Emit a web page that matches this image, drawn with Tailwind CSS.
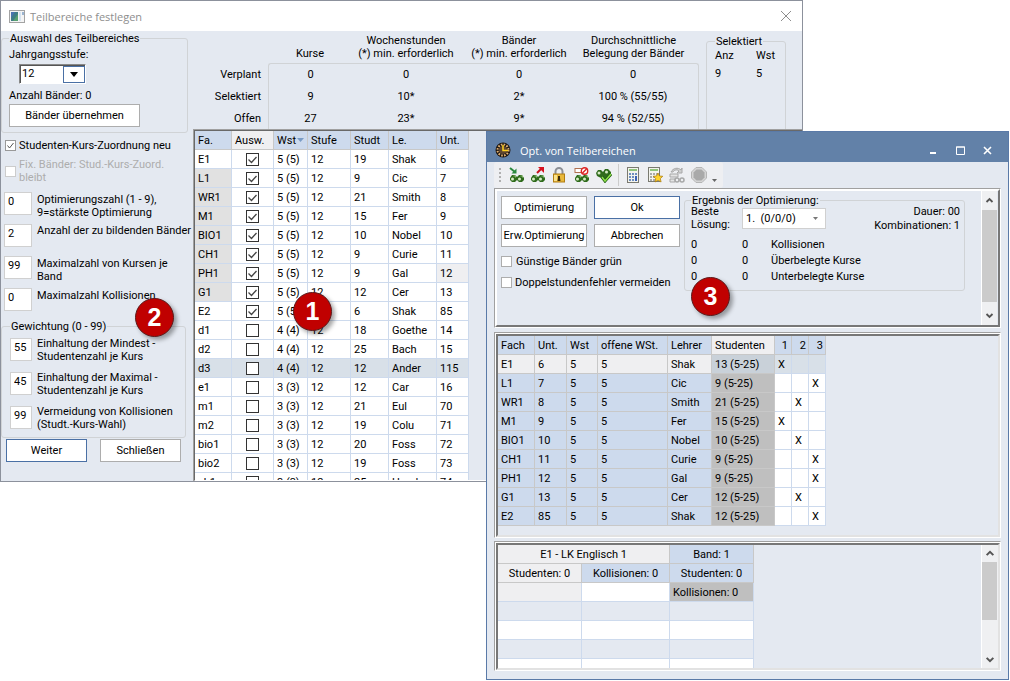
<!DOCTYPE html>
<html class="h-full bg-white" lang="de">
  <head>
    <meta charset="UTF-8" />
    <meta name="viewport" content="width=device-width, initial-scale=1.0" />
    <script src="https://cdn.jsdelivr.net/npm/@tailwindcss/browser@4"></script>
    <title>Teilbereiche festlegen</title>
  </head>
  <body
    class="relative h-full overflow-hidden font-[Roboto,'Liberation_Sans',sans-serif] text-[11px] leading-[13px] whitespace-nowrap text-black"
  >
    <!-- Window: Teilbereiche festlegen -->
    <main
      class="absolute top-0 right-[207px] bottom-[199px] left-0 flex flex-col border border-[#8c919c] bg-[#e4e9f1]"
    >
      <header class="flex h-[30px] shrink-0 items-center bg-white pr-2 pl-2">
        <svg class="h-4 w-4" viewBox="0 0 16 16">
          <rect x="0.5" y="2.5" width="15" height="12" fill="#f4f4f4" stroke="#a3a3a3" />
          <rect x="2" y="4" width="7" height="9" fill="#3f7d86" />
          <path d="M2 4h4l-4 6z" fill="#4a74b0" />
          <path d="M9 6v7H4z" fill="#58a070" />
          <rect x="10" y="4" width="2" height="9" fill="#d5e3f0" />
          <rect x="13" y="4" width="2" height="3" fill="#9ab4d0" />
        </svg>
        <h1 class="ml-[5px] flex-1 font-['Open_Sans',sans-serif] text-[11px] font-medium text-[#8e8e8e]">
          Teilbereiche festlegen
        </h1>
        <button class="flex h-5 w-4 items-center justify-center" aria-label="Schließen">
          <svg class="h-3 w-3" viewBox="0 0 12 12" fill="none" stroke="#8e8e8e">
            <path d="M1 1l10 10M11 1L1 11" />
          </svg>
        </button>
      </header>

      <div class="flex min-h-0 flex-1">
        <form class="w-[192px] shrink-0 pt-px">
          <fieldset class="w-[187px] rounded-[3px] border border-[#d0d3d6] px-[7px] pb-[5px]">
            <legend class="px-px">Auswahl des Teilbereiches</legend>
            <label for="stufe" class="mt-[3px] block">Jahrgangsstufe:</label>
            <div
              class="relative mt-[3px] ml-[10px] h-5 w-[67px] border border-t-[#888] border-r-white border-b-white border-l-[#888] bg-white"
            >
              <select
                id="stufe"
                class="block h-full w-full appearance-none border-t border-l border-[#555] pb-[3px] pl-px outline-none"
              >
                <option>12</option>
              </select>
              <span
                class="pointer-events-none absolute top-px right-0 bottom-0 flex w-[22px] items-center justify-center border border-[#4a70a5]"
              >
                <svg class="h-[5px] w-2" viewBox="0 0 8 5"><path d="M0 0h8L4 5z" /></svg>
              </span>
            </div>
            <p class="mt-[5px]">Anzahl Bänder: 0</p>
            <button type="button" class="mt-[2px] h-[23px] w-[131px] border border-[#adadad] bg-white">
              Bänder übernehmen
            </button>
          </fieldset>

          <label class="mt-[6px] flex items-center gap-[3px] pl-1">
            <span class="grid">
              <input
                type="checkbox"
                checked
                class="peer col-start-1 row-start-1 h-[11px] w-[11px] appearance-none border border-[#999] bg-white"
              />
              <svg
                class="col-start-1 row-start-1 hidden h-[11px] w-[11px] peer-checked:block"
                viewBox="0 0 11 11"
                fill="none"
                stroke="#555"
              >
                <path d="M2.500 5.500l2 2.500l4-5" />
              </svg>
            </span>
            Studenten-Kurs-Zuordnung neu
          </label>
          <label class="mt-[6px] flex items-center gap-[3px] pl-1 text-[#adadad]">
            <input
              type="checkbox"
              disabled
              class="h-[11px] w-[11px] shrink-0 appearance-none border border-[#ccc] bg-white"
            />
            <span>Fix. Bänder: Stud.-Kurs-Zuord.<br />bleibt</span>
          </label>

          <div class="mt-2 grid gap-[5px] pl-[3px]">
            <div class="flex h-[27px] items-start gap-[5px]">
              <input id="opt" value="0" class="h-[23px] w-7 border border-[#d0d0d0] bg-white px-[3px] pb-1 outline-none" />
              <label for="opt" class="pt-px">Optimierungszahl (1 - 9),<br />9=stärkste Optimierung</label>
            </div>
            <div class="flex h-[27px] items-start gap-[5px]">
              <input id="anz" value="2" class="h-[23px] w-7 border border-[#d0d0d0] bg-white px-[3px] pb-1 outline-none" />
              <label for="anz">Anzahl der zu bildenden Bänder</label>
            </div>
            <div class="flex h-[27px] items-start gap-[5px]">
              <input id="maxk" value="99" class="h-[23px] w-7 border border-[#d0d0d0] bg-white px-[3px] pb-1 outline-none" />
              <label for="maxk" class="pt-px">Maximalzahl von Kursen je<br />Band</label>
            </div>
            <div class="flex h-[27px] items-start gap-[5px]">
              <input id="koll" value="0" class="h-[23px] w-7 border border-[#d0d0d0] bg-white px-[3px] pb-1 outline-none" />
              <label for="koll" class="pt-px">Maximalzahl Kollisionen</label>
            </div>
          </div>

          <fieldset class="mt-[5px] w-[185px] rounded-[3px] border border-[#d0d3d6] px-2 pt-1 pb-[5px]">
            <legend class="px-px">Gewichtung (0 - 99)</legend>
            <div class="grid gap-[7px]">
              <div class="flex h-[27px] items-start gap-[5px]">
                <input id="g1" value="55" class="mt-px h-[23px] w-[22px] border border-[#d0d0d0] bg-white px-[3px] pb-1 outline-none" />
                <label for="g1">Einhaltung der Mindest -<br />Studentenzahl je Kurs</label>
              </div>
              <div class="flex h-[27px] items-start gap-[5px]">
                <input id="g2" value="45" class="mt-px h-[23px] w-[22px] border border-[#d0d0d0] bg-white px-[3px] pb-1 outline-none" />
                <label for="g2">Einhaltung der Maximal -<br />Studentenzahl je Kurs</label>
              </div>
              <div class="flex h-[27px] items-start gap-[5px]">
                <input id="g3" value="99" class="mt-px h-[23px] w-[22px] border border-[#d0d0d0] bg-white px-[3px] pb-1 outline-none" />
                <label for="g3">Vermeidung von Kollisionen<br />(Studt.-Kurs-Wahl)</label>
              </div>
            </div>
          </fieldset>

          <div class="mt-px flex gap-[13px] pl-[5px]">
            <button type="button" class="h-[23px] w-[81px] border border-[#4a70a5] bg-white">Weiter</button>
            <button type="button" class="h-[23px] w-[81px] border border-[#adadad] bg-white">Schließen</button>
          </div>
        </form>

        <div class="flex min-w-0 flex-1 flex-col">
          <div class="flex h-[98px] shrink-0 overflow-hidden">
            <table class="w-[506px] table-fixed border-separate border-spacing-0 text-center">
              <colgroup>
                <col class="w-[75px]" />
                <col class="w-[84px]" />
                <col class="w-[108px]" />
                <col class="w-[118px]" />
                <col class="w-[121px]" />
              </colgroup>
              <thead>
                <tr class="h-[32px] align-bottom">
                  <td></td>
                  <th class="pb-[3px] font-normal">Kurse</th>
                  <th class="pb-[3px] font-normal">Wochenstunden<br />(*) min. erforderlich</th>
                  <th class="pb-[3px] font-normal">Bänder<br />(*) min. erforderlich</th>
                  <th class="pr-[10px] pb-[3px] font-normal">Durchschnittliche<br />Belegung der Bänder</th>
                </tr>
              </thead>
              <tbody>
                <tr class="h-[22px]">
                  <th class="pr-[7px] text-right font-normal">Verplant</th>
                  <td class="rounded-tl-[3px] border-t border-l border-[#d0d3d6]">0</td>
                  <td class="border-t border-[#d0d3d6]">0</td>
                  <td class="border-t border-[#d0d3d6]">0</td>
                  <td class="rounded-tr-[3px] border-t border-r border-[#d0d3d6] pr-[10px]">0</td>
                </tr>
                <tr class="h-[22px]">
                  <th class="pr-[7px] text-right font-normal">Selektiert</th>
                  <td class="border-l border-[#d0d3d6]">9</td>
                  <td>10*</td>
                  <td>2*</td>
                  <td class="border-r border-[#d0d3d6] pr-[10px]">100 % (55/55)</td>
                </tr>
                <tr class="h-[22px]">
                  <th class="pr-[7px] text-right font-normal">Offen</th>
                  <td class="border-l border-[#d0d3d6]">27</td>
                  <td>23*</td>
                  <td>9*</td>
                  <td class="border-r border-[#d0d3d6] pr-[10px]">94 % (52/55)</td>
                </tr>
              </tbody>
            </table>
            <fieldset class="mt-1 ml-[7px] h-[110px] w-20 rounded-[3px] border border-[#d0d3d6] px-2">
              <legend class="px-px">Selektiert</legend>
              <dl class="grid grid-cols-[41px_auto] gap-y-[5px] pt-px">
                <dt>Anz</dt>
                <dt>Wst</dt>
                <dd>9</dd>
                <dd>5</dd>
              </dl>
            </fieldset>
          </div>

          <div class="min-h-0 flex-1 border-t border-l border-[#a0a0a0]">
            <div class="h-full overflow-hidden border-t border-l border-b border-[#696969] border-b-white">
              <table class="w-[274px] table-fixed border-separate border-spacing-0 bg-white text-left">
                <colgroup>
                  <col class="w-[37px]" />
                  <col class="w-[42px]" />
                  <col class="w-[34px]" />
                  <col class="w-[43px]" />
                  <col class="w-[38px]" />
                  <col class="w-[48px]" />
                  <col class="w-[32px]" />
                </colgroup>
                <thead>
                  <tr class="h-[19px] bg-[#cddaed]">
                    <th class="border-r border-b border-[#c8c8c8] pl-[3px] font-normal">Fa.</th>
                    <th class="border-r border-b border-[#c8c8c8] bg-[#efeff1] pl-[3px] font-normal">Ausw.</th>
                    <th class="border-r border-b border-[#c8c8c8] pl-[3px] font-normal">
                      <span class="flex items-center justify-between pr-[3px]">
                        Wst
                        <svg class="h-1 w-[7px]" viewBox="0 0 7 4"><path d="M0 0h7L3.500 4z" fill="#7a9cc6" /></svg>
                      </span>
                    </th>
                    <th class="border-r border-b border-[#c8c8c8] pl-[3px] font-normal">Stufe</th>
                    <th class="border-r border-b border-[#c8c8c8] pl-[3px] font-normal">Studt</th>
                    <th class="border-r border-b border-[#c8c8c8] pl-[3px] font-normal">Le.</th>
                    <th class="border-r border-b border-[#c8c8c8] pl-[3px] font-normal">Unt.</th>
                  </tr>
                </thead>
                <tbody id="kurse"></tbody>
              </table>
            </div>
          </div>
        </div>
      </div>
    </main>

    <!-- Window: Opt. von Teilbereichen -->
    <section
      class="absolute top-[131px] right-px bottom-px left-[486px] flex flex-col border border-[#5a7aa8] bg-[#e4e9f1]"
    >
      <header class="flex h-[30px] shrink-0 items-center bg-[#6281a8] pt-[6px] pr-[13px] pl-2 text-white">
        <svg class="h-4 w-4" viewBox="0 0 16 16">
          <circle cx="8" cy="8" r="7.500" fill="#1c1510" />
          <circle cx="8" cy="8" r="5.500" fill="none" stroke="#e0b070" stroke-width="2" stroke-dasharray="1.600 1.280" />
          <circle cx="8" cy="8" r="4" fill="#5e4630" />
          <path d="M8 3v5.500h5" fill="none" stroke="#ffd21f" stroke-width="1.500" />
        </svg>
        <h2 class="ml-[9px] flex-1 font-['Open_Sans',sans-serif] text-[11px] font-medium">Opt. von Teilbereichen</h2>
        <div class="flex gap-[11px]">
          <button class="flex h-4 w-4 items-center justify-center" aria-label="Minimieren">
            <svg class="h-[9px] w-[9px]" viewBox="0 0 9 9"><path d="M1 6h6v2H1z" fill="#fff" /></svg>
          </button>
          <button class="flex h-4 w-4 items-center justify-center" aria-label="Maximieren">
            <svg class="h-[9px] w-[9px]" viewBox="0 0 9 9" fill="none" stroke="#fff">
              <path d="M0.500 1h8v7.500h-8zM0 1h9" />
            </svg>
          </button>
          <button class="flex h-4 w-4 items-center justify-center" aria-label="Fenster schließen">
            <svg class="h-[9px] w-[9px]" viewBox="0 0 9 9" fill="none" stroke="#fff" stroke-width="1.600">
              <path d="M1 1l7 7M8 1L1 8" />
            </svg>
          </button>
        </div>
      </header>

      <svg class="hidden">
        <defs>
          <g id="glasses">
            <path d="M1 11l2-3h3l2 2 2-2h3l2 3v2l-2 2h-3l-2-2-2 2H3l-2-2z" fill="#2f6b1c" />
            <circle cx="3.500" cy="12" r="1.500" fill="#d6ecc4" />
            <circle cx="10.500" cy="12" r="1.500" fill="#d6ecc4" />
            <path d="M4.500 9h2v1.500M11.500 9h2v1.500" fill="none" stroke="#8cc070" />
          </g>
        </defs>
      </svg>
      <div class="flex min-h-0 flex-1 flex-col items-stretch px-[7px] pb-2">
        <nav class="flex h-[26px] w-[229px] shrink-0 items-center rounded-[3px] bg-[#eeeff2] pl-[5px]">
          <svg class="mr-2 h-4 w-[2px]" viewBox="0 0 2 16" fill="#b0b0b0">
            <path d="M0 1h2v2H0zM0 5h2v2H0zM0 9h2v2H0zM0 13h2v2H0z" />
          </svg>
          <button class="mr-[5px] h-4 w-4" aria-label="Laden">
            <svg viewBox="0 0 16 16">
              <use href="#glasses" />
              <path d="M1 1l5 4" stroke="#2b8a3e" stroke-width="2" />
              <path d="M7.500 1.500v5h-5z" fill="#2b8a3e" />
            </svg>
          </button>
          <button class="mr-[6px] h-4 w-4" aria-label="Ausgeben">
            <svg viewBox="0 0 16 16">
              <use href="#glasses" />
              <path d="M7 6l4-4" stroke="#c8101c" stroke-width="2" />
              <path d="M8 0h6v6z" fill="#d8121f" />
            </svg>
          </button>
          <button class="mr-[6px] h-4 w-4" aria-label="Sperren">
            <svg viewBox="0 0 16 16">
              <path d="M3.500 7V4.500a3.500 3.500 0 0 1 7 0V7" fill="none" stroke="#8d9096" stroke-width="2" />
              <rect x="1.500" y="7" width="11" height="8" fill="#e9b83a" stroke="#b07d12" />
              <path d="M2 8h3v6H2z" fill="#fbe28a" />
              <path d="M6 9h2v2l.5 3h-3l.5-3z" fill="#3b2a08" />
            </svg>
          </button>
          <button class="mr-[6px] h-4 w-4" aria-label="Zuordnung sperren">
            <svg viewBox="0 0 16 16">
              <use href="#glasses" />
              <rect x="1" y="1.500" width="8" height="4" fill="#fff" stroke="#b07050" />
              <circle cx="10.500" cy="4" r="3.200" fill="#fff" stroke="#d22" stroke-width="1.400" />
              <path d="M8.500 6l4-4" stroke="#d22" stroke-width="1.400" />
            </svg>
          </button>
          <button class="h-4 w-4" aria-label="Prüfen">
            <svg viewBox="0 0 16 16">
              <path d="M0 6l2-3h3l2 2 2-3h3l3 3v3l-5 4H7L1 9z" fill="#2f6b1c" />
              <circle cx="3" cy="6" r="1.500" fill="#d6ecc4" />
              <circle cx="10.500" cy="5" r="1.500" fill="#d6ecc4" />
              <path d="M6 10l3 4 6-7" fill="none" stroke="#1c5a10" stroke-width="3" />
              <path d="M6 10l3 4 6-7" fill="none" stroke="#8fe04a" stroke-width="1.500" />
            </svg>
          </button>
          <span class="mr-[6px] ml-[6px] h-[22px] w-px bg-[#ccc]"></span>
          <button class="mr-[6px] h-4 w-4" aria-label="Rechner">
            <svg viewBox="0 0 16 16">
              <rect x="2.500" y="0.500" width="11" height="15" fill="#f4f4ee" stroke="#7a7a70" />
              <rect x="4" y="2" width="8" height="2" fill="#8fc47a" />
              <path d="M4 7h8M4 10h8M4 13h8" stroke="#6f8fc0" stroke-width="2" stroke-dasharray="2 1" />
              <path d="M10 9h2v5h-2z" fill="#3c62b4" />
            </svg>
          </button>
          <button class="mr-[6px] h-4 w-4" aria-label="Rechner Favoriten">
            <svg viewBox="0 0 16 16">
              <rect x="1.500" y="0.500" width="11" height="14" fill="#f4f4ee" stroke="#7a7a70" />
              <rect x="3" y="2" width="8" height="2" fill="#8fc47a" />
              <path d="M3 7h8M3 10h5M3 13h5" stroke="#aaa" stroke-width="2" stroke-dasharray="2 1" />
              <path d="M11 6l1.500 3 3.300.300-2.500 2.300.8 3.400-3.100-1.700L8 15l.7-3.400L6.200 9.300 9.500 9z" fill="#ffd42a" stroke="#a87608" stroke-width="0.700" />
            </svg>
          </button>
          <button class="mr-[6px] h-4 w-4" aria-label="Aktualisieren" disabled>
            <svg viewBox="0 0 16 16" fill="none" stroke="#a8a8a8">
              <path d="M2 5c2-4 7-5 10-2l1-2v5H8l2-2c-2-2-5-1-6 1z" fill="#d0d0d0" />
              <path d="M1 7h8v3H1zM1 12h5v3H1z" fill="#e4e4e4" />
              <circle cx="8" cy="13" r="2" stroke-width="1.500" />
              <circle cx="13" cy="13" r="2" stroke-width="1.500" />
            </svg>
          </button>
          <button class="mr-[5px] h-4 w-4" aria-label="Stopp" disabled>
            <svg viewBox="0 0 16 16">
              <path d="M5 0.500h6L15.500 5v6L11 15.500H5L0.500 11V5z" fill="#d5d5d5" stroke="#b5b5b5" />
              <path d="M5.500 2.500h5l3 3v5l-3 3h-5l-3-3v-5z" fill="#a9a9a9" />
            </svg>
          </button>
          <svg class="mt-[10px] h-[3px] w-[5px]" viewBox="0 0 5 3"><path d="M0 0h5L2.500 3z" fill="#666" /></svg>
        </nav>

        <!-- Optimierung -->
        <div class="h-[140px] shrink-0 border border-[#a0a0a0] border-r-white border-b-white">
          <div class="flex h-full justify-between border-2 border-white border-r-[#777] border-b-[#777]">
            <form class="flex pt-[5px] pl-1">
              <div class="w-[180px]">
                <div class="grid grid-cols-[86px_86px] gap-x-[7px] gap-y-[5px]">
                  <button type="button" class="h-[23px] border border-[#adadad] bg-white">Optimierung</button>
                  <button type="button" class="h-[23px] border border-[#4a70a5] bg-white">Ok</button>
                  <button type="button" class="h-[23px] border border-[#adadad] bg-white">Erw.Optimierung</button>
                  <button type="button" class="h-[23px] border border-[#adadad] bg-white">Abbrechen</button>
                </div>
                <label class="mt-2 flex items-center gap-1">
                  <input type="checkbox" class="h-[11px] w-[11px] appearance-none border border-[#adadad] bg-white" />
                  Günstige Bänder grün
                </label>
                <label class="mt-2 flex items-center gap-[3px]">
                  <input type="checkbox" class="h-[11px] w-[11px] appearance-none border border-[#adadad] bg-white" />
                  Doppelstundenfehler vermeiden
                </label>
              </div>
              <fieldset class="ml-[3px] h-[95px] w-[281px] self-start rounded-[3px] border border-[#d0d3d6] pr-1 pl-[6px]">
                <legend class="px-px leading-[9px]">Ergebnis der Optimierung:</legend>
                <div class="flex items-start">
                  <label for="loesung" class="w-[51px]">Beste<br />Lösung:</label>
                  <div class="relative mt-[3px] h-[21px] w-[84px] border border-[#d0d0d0] bg-white">
                    <select id="loesung" class="block h-full w-full appearance-none pb-px pl-[3px] outline-none">
                      <option>1.&nbsp; (0/0/0)</option>
                    </select>
                    <svg class="pointer-events-none absolute top-2 right-[7px] h-[3px] w-[5px]" viewBox="0 0 5 3">
                      <path d="M0 0h5L2.500 3z" fill="#777" />
                    </svg>
                  </div>
                  <p class="flex-1 text-right leading-[14px]">Dauer: 00<br />Kombinationen: 1</p>
                </div>
                <dl class="mt-[4px] grid grid-cols-[51px_29px_auto] leading-4">
                  <dd>0</dd>
                  <dd>0</dd>
                  <dt>Kollisionen</dt>
                  <dd>0</dd>
                  <dd>0</dd>
                  <dt>Überbelegte Kurse</dt>
                  <dd>0</dd>
                  <dd>0</dd>
                  <dt>Unterbelegte Kurse</dt>
                </dl>
              </fieldset>
            </form>
            <div class="mr-px flex w-4 shrink-0 flex-col border-l border-white bg-[#eff0f2]">
              <svg class="h-[19px] w-full p-[3px]" viewBox="0 0 9 9" fill="none" stroke="#555" stroke-width="1.800">
                <path d="M1.500 6l3-3 3 3" />
              </svg>
              <div class="h-[92px] bg-[#cbcbcb]"></div>
              <svg class="mt-auto h-[19px] w-full p-[3px]" viewBox="0 0 9 9" fill="none" stroke="#555" stroke-width="1.800">
                <path d="M1.500 3l3 3 3-3" />
              </svg>
            </div>
          </div>
        </div>

        <!-- Bänder -->
        <div class="mt-1 min-h-0 flex-1 border border-[#a0a0a0] border-r-white border-b-white bg-white pt-px pl-px">
          <div class="h-full overflow-hidden border-2 border-[#777] border-r-[#e2e2e2] border-b-[#e2e2e2] bg-[#e4e9f1]">
            <table class="w-[328px] table-fixed border-separate border-spacing-0 text-left">
              <colgroup>
                <col class="w-[37px]" />
                <col class="w-[32px]" />
                <col class="w-[31px]" />
                <col class="w-[70px]" />
                <col class="w-[44px]" />
                <col class="w-[63px]" />
                <col class="w-[17px]" />
                <col class="w-[17px]" />
                <col class="w-[17px]" />
              </colgroup>
              <thead>
                <tr class="h-[19px] bg-[#cddaed]">
                  <th class="border-r border-b border-[#c8c8c8] pl-[3px] font-normal">Fach</th>
                  <th class="border-r border-b border-[#c8c8c8] pl-[3px] font-normal">Unt.</th>
                  <th class="border-r border-b border-[#c8c8c8] pl-[3px] font-normal">Wst</th>
                  <th class="border-r border-b border-[#c8c8c8] pl-[3px] font-normal">offene WSt.</th>
                  <th class="border-r border-b border-[#c8c8c8] pl-[3px] font-normal">Lehrer</th>
                  <th class="border-r border-b border-[#c8c8c8] bg-[#efeff1] pl-[3px] font-normal">Studenten</th>
                  <th class="border-r border-b border-[#c8c8c8] pr-[3px] text-right font-normal">1</th>
                  <th class="border-r border-b border-[#c8c8c8] pr-[2px] text-right font-normal">2</th>
                  <th class="border-r border-b border-[#c8c8c8] pr-[2px] text-right font-normal">3</th>
                </tr>
              </thead>
              <tbody id="baender"></tbody>
            </table>
          </div>
        </div>

        <!-- Studenten / Kollisionen -->
        <div class="mt-[3px] h-[130px] shrink-0 border border-[#a0a0a0] border-r-white border-b-white bg-white pt-px pl-px">
          <div class="flex h-full justify-between overflow-hidden border-2 border-[#777] border-r-[#e2e2e2] border-b-[#e2e2e2] bg-[#e4e9f1]">
            <table class="h-[133px] w-[256px] table-fixed border-separate border-spacing-0 text-center">
              <colgroup>
                <col class="w-[84px]" />
                <col class="w-[88px]" />
                <col class="w-[84px]" />
              </colgroup>
              <thead>
                <tr class="h-[19px] bg-[#efeff1]">
                  <th colspan="2" class="border-r border-b border-[#c8c8c8] font-normal">E1 - LK Englisch 1</th>
                  <th class="border-r border-b border-[#c8c8c8] bg-[#cddaed] font-normal">Band: 1</th>
                </tr>
                <tr class="h-[19px] bg-[#cddaed]">
                  <th class="border-r border-b border-[#c8c8c8] bg-[#efeff1] font-normal">Studenten: 0</th>
                  <th class="border-r border-b border-[#c8c8c8] font-normal">Kollisionen: 0</th>
                  <th class="border-r border-b border-[#c8c8c8] font-normal">Studenten: 0</th>
                </tr>
              </thead>
              <tbody>
                <tr class="h-[19px] bg-white">
                  <td class="border-r border-b border-[#cddaed] bg-[#efeff1]"></td>
                  <td class="border-r border-b border-[#cddaed]"></td>
                  <td class="border-r border-b border-[#cddaed] bg-[#bfbfbf] pl-[3px] text-left">Kollisionen: 0</td>
                </tr>
                <tr class="h-[19px]">
                  <td class="border-r border-b border-[#cddaed]"></td>
                  <td class="border-r border-b border-[#cddaed]"></td>
                  <td class="border-r border-b border-[#cddaed]"></td>
                </tr>
                <tr class="h-[19px] bg-white">
                  <td class="border-r border-b border-[#cddaed]"></td>
                  <td class="border-r border-b border-[#cddaed]"></td>
                  <td class="border-r border-b border-[#cddaed]"></td>
                </tr>
                <tr class="h-[19px]">
                  <td class="border-r border-b border-[#cddaed]"></td>
                  <td class="border-r border-b border-[#cddaed]"></td>
                  <td class="border-r border-b border-[#cddaed]"></td>
                </tr>
                <tr class="h-[19px] bg-white">
                  <td class="border-r border-b border-[#cddaed]"></td>
                  <td class="border-r border-b border-[#cddaed]"></td>
                  <td class="border-r border-b border-[#cddaed]"></td>
                </tr>
              </tbody>
            </table>
            <div class="flex h-full w-[17px] shrink-0 flex-col border-l border-white bg-[#eff0f2]">
              <svg class="h-[17px] w-full p-[3px]" viewBox="0 0 9 9" fill="none" stroke="#555" stroke-width="1.800">
                <path d="M1.500 6l3-3 3 3" />
              </svg>
              <div class="mr-px h-[58px] bg-[#cbcbcb]"></div>
              <svg class="mt-auto h-[17px] w-full p-[3px]" viewBox="0 0 9 9" fill="none" stroke="#555" stroke-width="1.800">
                <path d="M1.500 3l3 3 3-3" />
              </svg>
            </div>
          </div>
        </div>
      </div>
    </section>

    <!-- Callouts -->
    <span
      class="absolute top-[292px] left-[293px] flex h-[39px] w-[39px] items-center justify-center rounded-full border border-[#5c1a1a] bg-[#c00000] font-['Liberation_Sans',sans-serif] text-[25px] font-bold text-white shadow-[3px_3px_4px_rgba(0,0,0,0.35)]"
      >1</span
    >
    <span
      class="absolute top-[298px] left-[135px] flex h-[39px] w-[39px] items-center justify-center rounded-full border border-[#5c1a1a] bg-[#c00000] font-['Liberation_Sans',sans-serif] text-[25px] font-bold text-white shadow-[3px_3px_4px_rgba(0,0,0,0.35)]"
      >2</span
    >
    <span
      class="absolute top-[277px] left-[691px] flex h-[39px] w-[39px] items-center justify-center rounded-full border border-[#5c1a1a] bg-[#c00000] font-['Liberation_Sans',sans-serif] text-[25px] font-bold text-white shadow-[3px_3px_4px_rgba(0,0,0,0.35)]"
      >3</span
    >

    <script>
      // fach, ausgewählt, wst, stufe, studt, lehrer, unt
      const kurse = [
        ["E1", true, "5 (5)", 12, 19, "Shak", 6],
        ["L1", true, "5 (5)", 12, 9, "Cic", 7],
        ["WR1", true, "5 (5)", 12, 21, "Smith", 8],
        ["M1", true, "5 (5)", 12, 15, "Fer", 9],
        ["BIO1", true, "5 (5)", 12, 10, "Nobel", 10],
        ["CH1", true, "5 (5)", 12, 9, "Curie", 11],
        ["PH1", true, "5 (5)", 12, 9, "Gal", 12],
        ["G1", true, "5 (5)", 12, 12, "Cer", 13],
        ["E2", true, "5 (5)", 12, 6, "Shak", 85],
        ["d1", false, "4 (4)", 12, 18, "Goethe", 14],
        ["d2", false, "4 (4)", 12, 25, "Bach", 15],
        ["d3", false, "4 (4)", 12, 12, "Ander", 115],
        ["e1", false, "3 (3)", 12, 12, "Car", 16],
        ["m1", false, "3 (3)", 12, 21, "Eul", 70],
        ["m2", false, "3 (3)", 12, 19, "Colu", 71],
        ["bio1", false, "3 (3)", 12, 20, "Foss", 72],
        ["bio2", false, "3 (3)", 12, 19, "Foss", 73],
        ["ch1", false, "3 (3)", 12, 25, "Hund", 74],
      ];
      const grau = ["L1", "WR1", "M1", "BIO1", "CH1", "PH1", "G1"];
      const td = "border-r border-b border-[#cddaed] pl-[3px]";

      document.getElementById("kurse").innerHTML = kurse
        .map(([fach, an, wst, stufe, studt, lehrer, unt]) => {
          const row = fach === "d3" ? "h-[19px] bg-[#d8e0e8]" : "h-[19px]";
          return `<tr class="${row}">
            <td class="${td} ${grau.includes(fach) ? "bg-[#e1e1e1]" : ""}">${fach}</td>
            <td class="border-r border-b border-[#cddaed]">
              <span class="grid justify-center">
                <input type="checkbox" aria-label="${fach}" ${an ? "checked" : ""}
                  class="peer col-start-1 row-start-1 h-[13px] w-[13px] appearance-none border border-[#333] bg-white" />
                <svg class="col-start-1 row-start-1 hidden h-[13px] w-[13px] peer-checked:block"
                  viewBox="0 0 13 13" fill="none" stroke="#444" stroke-width="1.300"><path d="M2.500 6.500l3 3l5-5.500" /></svg>
              </span>
            </td>
            <td class="${td}">${wst}</td>
            <td class="${td}">${stufe}</td>
            <td class="${td}">${studt}</td>
            <td class="${td}">${lehrer}</td>
            <td class="${td} ${unt === 12 ? "bg-[#efeff1]" : ""}">${unt}</td>
          </tr>`;
        })
        .join("");

      // fach, unt, lehrer, studenten, band
      const baender = [
        ["E1", 6, "Shak", 13, 1],
        ["L1", 7, "Cic", 9, 3],
        ["WR1", 8, "Smith", 21, 2],
        ["M1", 9, "Fer", 15, 1],
        ["BIO1", 10, "Nobel", 10, 2],
        ["CH1", 11, "Curie", 9, 3],
        ["PH1", 12, "Gal", 9, 3],
        ["G1", 13, "Cer", 12, 2],
        ["E2", 85, "Shak", 12, 3],
      ];

      document.getElementById("baender").innerHTML = baender
        .map(([fach, unt, lehrer, stud, band], i) => {
          const fix = `border-r border-b border-[#c8c8c8] pl-[3px] ${i ? "bg-[#cddaed]" : "bg-[#efeff1]"}`;
          const x = `border-r border-b border-[#cddaed] pl-[3px] ${i ? "bg-white" : "bg-[#d8e0e8]"}`;
          return `<tr class="h-[19px]">
            <td class="${fix}">${fach}</td>
            <td class="${fix}">${unt}</td>
            <td class="${fix}">5</td>
            <td class="${fix}">5</td>
            <td class="${fix}">${lehrer}</td>
            <td class="border-r border-b border-[#c8c8c8] pl-[3px] ${i ? "bg-[#bfbfbf]" : "bg-[#c9d1d9]"}">${stud} (5-25)</td>
            ${[1, 2, 3].map((b) => `<td class="${x}">${b === band ? "X" : ""}</td>`).join("")}
          </tr>`;
        })
        .join("");
    </script>
  </body>
</html>
